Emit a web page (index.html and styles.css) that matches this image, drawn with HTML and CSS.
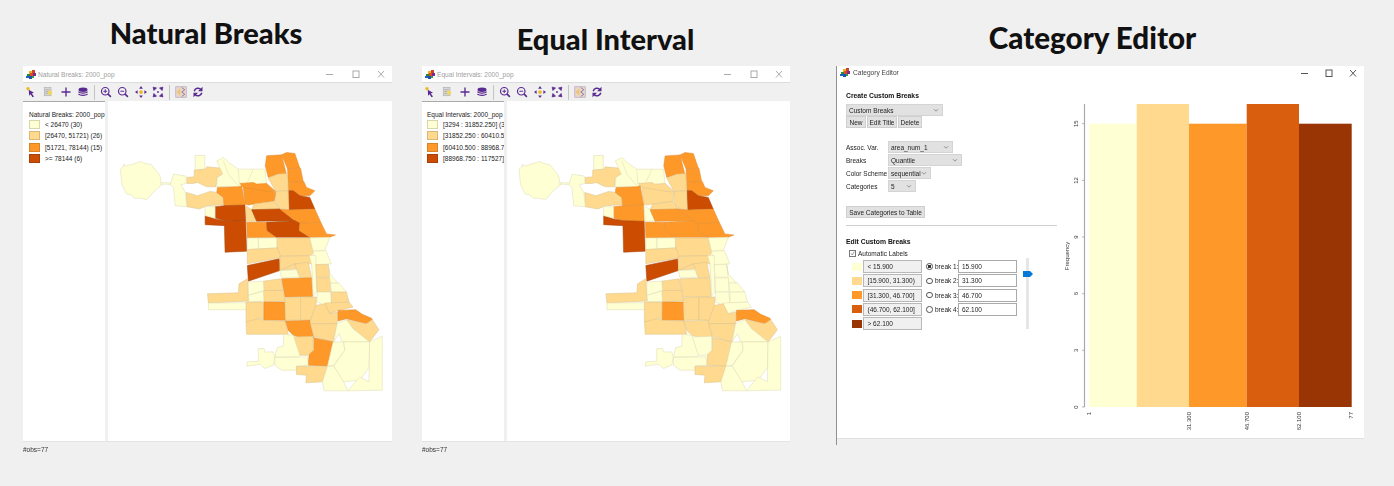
FILE: index.html
```html
<!DOCTYPE html>
<html lang="en">
<head>
<meta charset="utf-8">
<title>Natural Breaks, Equal Interval, Category Editor</title>
<link rel="stylesheet" href="styles.css">
</head>
<body>
<svg class="sprite" aria-hidden="true">
  <defs>
    <g id="logo">
      <rect x="3" y="1" width="3" height="3" fill="#e8b020"/><rect x="6" y="0" width="3" height="3" fill="#d0402a"/>
      <rect x="1" y="4" width="3" height="3" fill="#2a8a3a"/><rect x="4" y="3" width="3" height="3" fill="#e04a20"/>
      <rect x="7" y="3" width="3" height="3" fill="#7a2a90"/><rect x="0" y="6" width="3" height="2" fill="#1f5fc0"/>
      <rect x="3" y="6" width="3" height="3" fill="#2050b0"/><rect x="6" y="6" width="2" height="2" fill="#30a040"/>
    </g>
    <g id="i-select"><path d="M5 5l7 4-3 1 3 4-2 1-2.500-4-2 2z" fill="#5a2a90"/><circle cx="4" cy="3.500" r="2.200" fill="#f0b820"/></g>
    <g id="i-table"><rect x="3" y="2" width="9" height="11" fill="#d8d8d8" stroke="#aaa" stroke-width=".8"/><path d="M4.500 5h6M4.500 7.500h6M4.500 10h6" stroke="#999" stroke-width=".8"/><circle cx="10.500" cy="9" r="3" fill="#f0d860"/></g>
    <g id="i-plus"><path d="M8 2v12M2 8h12" stroke="#5a2a90" stroke-width="1.800"/></g>
    <g id="i-layers"><ellipse cx="8" cy="5" rx="6" ry="3" fill="#5a2a90"/><path d="M2 7.500c1 2.500 11 2.500 12 0M2 10.500c1 2.500 11 2.500 12 0" fill="none" stroke="#5a2a90" stroke-width="1.700"/></g>
    <g id="i-zoomin"><circle cx="7" cy="7" r="5" fill="none" stroke="#5a2a90" stroke-width="1.600"/><path d="M10.500 10.500l4 4" stroke="#5a2a90" stroke-width="2.200"/><path d="M7 4.500v5M4.500 7h5" stroke="#5a2a90" stroke-width="1.300"/></g>
    <g id="i-zoomout"><circle cx="7" cy="7" r="5" fill="none" stroke="#5a2a90" stroke-width="1.600"/><path d="M10.500 10.500l4 4" stroke="#5a2a90" stroke-width="2.200"/><path d="M4.500 7h5" stroke="#5a2a90" stroke-width="1.300"/></g>
    <g id="i-move"><circle cx="8" cy="8" r="2.500" fill="#f0b820"/><path d="M8 0l2.500 3.500h-5zM8 16l2.500-3.500h-5zM0 8l3.500-2.500v5zM16 8l-3.500-2.500v5z" fill="#5a2a90"/></g>
    <g id="i-fit"><path d="M1.500 1.500l4.500 1-3.500 3.500zM14.500 1.500l-4.500 1 3.500 3.500zM1.500 14.500l4.500-1-3.500-3.500zM14.500 14.500l-4.500-1 3.500-3.500z" fill="#5a2a90" stroke="#5a2a90"/><circle cx="8" cy="8" r="1.200" fill="#5a2a90"/></g>
    <g id="i-swatch"><rect x="1" y="1" width="14" height="14" fill="#e8d8c0" stroke="#b9a8d0"/><path d="M9 2l4 3-4 3 4 3-4 3" fill="none" stroke="#8a6ab0" stroke-width="1.200"/><path d="M2 8l5-5v10z" fill="#f0c080"/></g>
    <g id="i-refresh"><path d="M3 7a5 5 0 0 1 9-2M13 9a5 5 0 0 1-9 2" fill="none" stroke="#5a2a90" stroke-width="2"/><path d="M14 1v6H8zM2 15V9h6z" fill="#5a2a90"/></g>
    <g id="i-min"><path d="M0 4.500h7" stroke="currentColor"/></g>
    <g id="i-max"><rect x="1" y="1" width="6" height="6.500" fill="none" stroke="currentColor"/></g>
    <g id="i-close"><path d="M1 1l6 6.500M7 1L1 7.500" stroke="currentColor"/></g>
    <g id="i-chev"><path d="M1 1.500l2.500 2.500L6 1.500" fill="none" stroke="#666" stroke-width=".8"/></g>

    <g id="chicago">
      <g transform="translate(110 140) scale(.33333)">
        <path class="a" d="M30 85l8-6 3-10 2 7 24-6 25-8 10 5 22 5 12 16 12 14 4 14-1 15 5 1-17 13-13 13-11 14-8 4-21-4-12 1-12-11-13-2-8-15-6-13z"/>
        <path class="a" d="M155 125l28 2v4l-28-1z"/>
        <path class="a" d="M255 44h29v41l-29 3z"/>
        <path class="b" d="M252 88l33-3 5-7 45 4 3 18-18 10-2 28h-28l-28-13-12 3h-20v-18l22-2z"/>
        <path class="b" d="M228 155l34 10 38-13 20 3 20 15v22l-50 3-22 10-38-7z"/>
        <path class="a" d="M190 100l38 6v22l-16 4 6 10 7 13 5 43-35-3-3-30-2-25-10-8z"/>
        <path class="a" d="M320 60l20-10 20 18 25 17h80l5 45-75 5-10 3h-65l2-28 16-10z"/>
        <path class="line" d="M385 85l3 50M430 85l-18 40M340 60l15 40 30 35"/>
        <path class="c" d="M470 45l45-3 17 68-27-10-30 10-9-35z"/>
        <path class="c" d="M515 42l15-7 25 3 15 44-37 2z"/>
        <path class="c" d="M533 84l39-2 8 40-45 3z"/>
        <path class="c" d="M535 125l47-3 8 18 25 10-15 15h-30l-20-15h-15z"/>
        <path class="d" d="M535 150h15l20 15 30 5 15 35-78 3z"/>
        <path class="b" d="M475 112l30-12 27-2 3 52-38 2z"/>
        <path class="b" d="M497 152l38-2 2 58-27-6-13-17z"/>
        <path class="cb" d="M395 135l-5-7 40-3 10 5 30-2 27 24-82 3-10-10z"/>
        <path class="cb" d="M400 140l97 15-4 27-61 8-17 3-10-3z"/>
        <path class="c" d="M322 140l63-2 10-3 10 58-63 2-2-25-20-15z"/>
        <path class="b" d="M432 190l61-8 17 23-85 2z"/>
        <path class="dc" d="M315 198l27-3 63-2 2 49-62-2-30-8z"/>
        <path class="d" d="M285 225l30 10 30 5 62 2 3 90-65 3-2-80-58-3z"/>
        <path class="a" d="M285 198h30v34l-30-7z"/>
        <path class="ba" d="M407 195l18 12 15 35h-30z"/>
        <path class="dc" d="M425 207l85-2 45 35-115 2z"/>
        <path class="c" d="M510 205l27 3 78-3 18 40-63 3-15-8z"/>
        <path class="c" d="M410 245h60l2 25 28 20-88 2z"/>
        <path class="dc" d="M470 245l85-5 15 8-2 22 32 20H500l-28-20z"/>
        <path class="c" d="M570 248l63-3 17 35 27 3-17 7h-60l-32-20z"/>
        <path class="a" d="M412 292h33v33l-33 2z"/>
        <path class="a" d="M445 292h55l2 30-55 3z"/>
        <path class="b" d="M502 292h98l10 43-5 10-93 2-10-25z"/>
        <path class="a" d="M600 292l60-2-15 40-35 2z"/>
        <path class="a" d="M610 332l38-2 17 40-50 2z"/>
        <path class="b" d="M412 327l90-5 10 25-2 5-98 18z"/>
      </g>
      <g transform="translate(190 260) scale(.33333)">
        <path class="d" d="M172 15l96-20 2 35-95 32z"/>
        <path class="b" d="M270-12l92-3 3 25-50 0-45 20z"/>
        <path class="b" d="M270 30l45-20 5 15-50 5z"/>
        <path class="b" d="M315 10l40-5 10 45-35 2-10-27z"/>
        <path class="a" d="M270 30l50-2 8 22-53 2z"/>
        <path class="a" d="M358-15h20l2 110-10 13-2-56-3-42z"/>
        <path class="ba" d="M378 12h37l7 38h-42z"/>
        <path class="ba" d="M380 52h42v43h-40z"/>
        <path class="a" d="M382 95h40l3 33-20 7-23-10z"/>
        <path class="a" d="M415 10l5 30 25 28h-23z"/>
        <path class="a" d="M422 68h26l22 27h-45z"/>
        <path class="ba" d="M425 95h45l8 30-53 3z"/>
        <path class="ba" d="M405 128l73-3 12 15-45 10-27 10-13-25z"/>
        <path class="cb" d="M275 55l90-3 3 56-83 2z"/>
        <path class="b" d="M220 62l52-7 8 35h-58z"/>
        <path class="b" d="M220 90h60l5 32-63 3z"/>
        <path class="a" d="M175 65l45-3 2 28-47 15z"/>
        <path class="a" d="M175 105l45-13 2 30-44 3z"/>
        <path class="b" d="M52 100l93-3 2-27 25-15 3 67-120 6z"/>
        <path class="a" d="M55 128l115-1v21H55z"/>
        <path class="b" d="M168 125h52l2 53-17-6-5 13h-32z"/>
        <path class="c" d="M222 125h63l2 55h-65z"/>
        <path class="b" d="M285 112l47-2v68l-45 2z"/>
        <path class="b" d="M332 110h48l-2 30-16 40-30-2z"/>
        <path class="b" d="M168 185l37-10 17 5 65 2 8 40H170z"/>
        <path class="cb" d="M287 182l73-2 12 52-27 3-35-10-15-15z"/>
        <path class="b" d="M378 135l27-5 15 30 25-5-3 35h-80v-10z"/>
        <path class="b" d="M362 190h80l-12 55-58-17z"/>
        <path class="c" d="M445 150l53-2 20 14 28 12 2 5-18 11-60-15-25 7z"/>
        <path class="b" d="M470 178l60 12 18-12 20 30-28 37-50-40z"/>
        <path class="a" d="M442 190l28-12 20 27 50 40h-82l-10-25-16 25z"/>
        <path class="cb" d="M372 232l58 13-17 73-58-3 3-35 14-10z"/>
        <path class="ba" d="M310 230l60-2v42l-15 15h-27z"/>
        <path class="a" d="M282 222l28 3 20 60-5 5h-70l7-28 18-4z"/>
        <path class="a" d="M205 265h17l3 10h25l5 15-5 25-25 10-15-13-40 6 2-13 33-2z"/>
        <path class="a" d="M255 292l98-2 2 25-35 3v12h-45l-20-15z"/>
        <path class="b" d="M320 318h93l-15 47-50 3 2-23-30-2z"/>
        <path class="a" d="M430 245h32l3 25-33 45-19 3z"/>
        <path class="a" d="M462 245h78l-2 77-28 38-50 5-28-47 33-48z"/>
        <path class="a" d="M540 245l38-17v162l-103 2 35-42 28 15z"/>
        <path class="a" d="M413 318h19l28 44 15 30h-72l-5-27z"/>
      </g>
    </g>
  </defs>
</svg>

<main class="stage">
  <section class="column column-natural">
    <h2 class="headline">Natural Breaks</h2>
    <div class="mapwin">
      <header class="titlebar">
        <svg class="logo" viewBox="0 0 10 9"><use href="#logo"/></svg>
        <span class="wintitle">Natural Breaks: 2000_pop</span>
        <span class="winbtns">
          <svg class="winbtn" viewBox="0 0 8 8"><use href="#i-min"/></svg>
          <svg class="winbtn" viewBox="0 0 8 8"><use href="#i-max"/></svg>
          <svg class="winbtn" viewBox="0 0 8 8"><use href="#i-close"/></svg>
        </span>
      </header>
      <nav class="toolbar">
        <svg class="tool" viewBox="0 0 16 16"><use href="#i-select"/></svg>
        <svg class="tool" viewBox="0 0 16 16"><use href="#i-table"/></svg>
        <svg class="tool" viewBox="0 0 16 16"><use href="#i-plus"/></svg>
        <svg class="tool" viewBox="0 0 16 16"><use href="#i-layers"/></svg>
        <i class="toolsep"></i>
        <svg class="tool" viewBox="0 0 16 16"><use href="#i-zoomin"/></svg>
        <svg class="tool" viewBox="0 0 16 16"><use href="#i-zoomout"/></svg>
        <svg class="tool" viewBox="0 0 16 16"><use href="#i-move"/></svg>
        <svg class="tool" viewBox="0 0 16 16"><use href="#i-fit"/></svg>
        <i class="toolsep"></i>
        <svg class="tool" viewBox="0 0 16 16"><use href="#i-swatch"/></svg>
        <svg class="tool" viewBox="0 0 16 16"><use href="#i-refresh"/></svg>
      </nav>
      <div class="mapbody">
        <aside class="legend">
          <div class="legend-title">Natural Breaks: 2000_pop</div>
          <div class="legend-row"><i class="swatch s1"></i><span>&lt; 26470 (30)</span></div>
          <div class="legend-row"><i class="swatch s2"></i><span>[26470, 51721) (26)</span></div>
          <div class="legend-row"><i class="swatch s3"></i><span>[51721, 78144) (15)</span></div>
          <div class="legend-row"><i class="swatch s4"></i><span>&gt;= 78144 (6)</span></div>
        </aside>
        <div class="mapview map-natural"><svg class="map" viewBox="108 100 284 341"><use href="#chicago"/></svg></div>
      </div>
      <footer class="status">#obs=77</footer>
    </div>
  </section>

  <section class="column column-equal">
    <h2 class="headline">Equal Interval</h2>
    <div class="mapwin">
      <header class="titlebar">
        <svg class="logo" viewBox="0 0 10 9"><use href="#logo"/></svg>
        <span class="wintitle">Equal Intervals: 2000_pop</span>
        <span class="winbtns">
          <svg class="winbtn" viewBox="0 0 8 8"><use href="#i-min"/></svg>
          <svg class="winbtn" viewBox="0 0 8 8"><use href="#i-max"/></svg>
          <svg class="winbtn" viewBox="0 0 8 8"><use href="#i-close"/></svg>
        </span>
      </header>
      <nav class="toolbar">
        <svg class="tool" viewBox="0 0 16 16"><use href="#i-select"/></svg>
        <svg class="tool" viewBox="0 0 16 16"><use href="#i-table"/></svg>
        <svg class="tool" viewBox="0 0 16 16"><use href="#i-plus"/></svg>
        <svg class="tool" viewBox="0 0 16 16"><use href="#i-layers"/></svg>
        <i class="toolsep"></i>
        <svg class="tool" viewBox="0 0 16 16"><use href="#i-zoomin"/></svg>
        <svg class="tool" viewBox="0 0 16 16"><use href="#i-zoomout"/></svg>
        <svg class="tool" viewBox="0 0 16 16"><use href="#i-move"/></svg>
        <svg class="tool" viewBox="0 0 16 16"><use href="#i-fit"/></svg>
        <i class="toolsep"></i>
        <svg class="tool" viewBox="0 0 16 16"><use href="#i-swatch"/></svg>
        <svg class="tool" viewBox="0 0 16 16"><use href="#i-refresh"/></svg>
      </nav>
      <div class="mapbody">
        <aside class="legend">
          <div class="legend-title">Equal Intervals: 2000_pop</div>
          <div class="legend-row"><i class="swatch s1"></i><span>[3294 : 31852.250] (37</span></div>
          <div class="legend-row"><i class="swatch s2"></i><span>[31852.250 : 60410.50</span></div>
          <div class="legend-row"><i class="swatch s3"></i><span>[60410.500 : 88968.75</span></div>
          <div class="legend-row"><i class="swatch s4"></i><span>[88968.750 : 117527] (</span></div>
        </aside>
        <div class="mapview map-equal"><svg class="map" viewBox="108 100 284 341"><use href="#chicago"/></svg></div>
      </div>
      <footer class="status">#obs=77</footer>
    </div>
  </section>

  <section class="column column-editor">
    <h2 class="headline">Category Editor</h2>
    <div class="editorwin">
      <header class="titlebar titlebar-editor">
        <svg class="logo" viewBox="0 0 10 9"><use href="#logo"/></svg>
        <span class="wintitle">Category Editor</span>
        <span class="winbtns">
          <svg class="winbtn" viewBox="0 0 8 8"><use href="#i-min"/></svg>
          <svg class="winbtn" viewBox="0 0 8 8"><use href="#i-max"/></svg>
          <svg class="winbtn" viewBox="0 0 8 8"><use href="#i-close"/></svg>
        </span>
      </header>
      <div class="editorbody">
        <div class="controls">
          <h3 class="group">Create Custom Breaks</h3>
          <div class="combo combo-main"><span>Custom Breaks</span><svg class="chev" viewBox="0 0 7 5"><use href="#i-chev"/></svg></div>
          <div class="btnrow">
            <span class="btn btn-new">New</span>
            <span class="btn btn-edit">Edit Title</span>
            <span class="btn btn-del">Delete</span>
          </div>
          <div class="assoc">
            <div class="field"><span class="flabel">Assoc. Var.</span><div class="combo combo-var"><span>area_num_1</span><svg class="chev" viewBox="0 0 7 5"><use href="#i-chev"/></svg></div></div>
            <div class="field"><span class="flabel">Breaks</span><div class="combo combo-breaks"><span>Quantile</span><svg class="chev" viewBox="0 0 7 5"><use href="#i-chev"/></svg></div></div>
            <div class="field"><span class="flabel">Color Scheme</span><div class="combo combo-scheme"><span>sequential</span><svg class="chev" viewBox="0 0 7 5"><use href="#i-chev"/></svg></div></div>
            <div class="field"><span class="flabel">Categories</span><div class="combo combo-cat"><span>5</span><svg class="chev" viewBox="0 0 7 5"><use href="#i-chev"/></svg></div></div>
          </div>
          <span class="btn btn-save">Save Categories to Table</span>
          <hr class="rule">
          <h3 class="group">Edit Custom Breaks</h3>
          <label class="auto"><i class="check"><svg viewBox="0 0 7 7"><path d="M1.500 3.500l1.500 2 3-4.500" fill="none" stroke="#444" stroke-width=".8"/></svg></i>Automatic Labels</label>
          <div class="breaks">
            <div class="breakrows">
              <div class="brow"><i class="chip e1"></i><span class="blabel">&lt; 15.900</span><i class="radio on"></i><span class="bname">break 1:</span><span class="binput">15.900</span></div>
              <div class="brow"><i class="chip e2"></i><span class="blabel">[15.900, 31.300)</span><i class="radio"></i><span class="bname">break 2:</span><span class="binput">31.300</span></div>
              <div class="brow"><i class="chip e3"></i><span class="blabel">[31.300, 46.700]</span><i class="radio"></i><span class="bname">break 3:</span><span class="binput">46.700</span></div>
              <div class="brow"><i class="chip e4"></i><span class="blabel">(46.700, 62.100]</span><i class="radio"></i><span class="bname">break 4:</span><span class="binput">62.100</span></div>
              <div class="brow"><i class="chip e5"></i><span class="blabel">&gt; 62.100</span></div>
            </div>
            <div class="slider"><i class="thumb"></i></div>
          </div>
        </div>
        <svg class="chart" viewBox="1060 79 304 359">
          <rect x="1089.300" y="123.700" width="47.400" height="283.300" fill="#ffffd4"/>
          <rect x="1136.700" y="104" width="52.300" height="303" fill="#fed98e"/>
          <rect x="1189" y="123.700" width="57.700" height="283.300" fill="#fe9929"/>
          <rect x="1246.700" y="104" width="52.300" height="303" fill="#d95f0e"/>
          <rect x="1299" y="123.700" width="52.700" height="283.300" fill="#993404"/>
          <path class="axis" d="M1084.500 104v303"/>
          <path class="tick" d="M1082 123.700h2.500M1082 180.400h2.500M1082 237h2.500M1082 293.700h2.500M1082 350.300h2.500M1082 407h2.500"/>
          <text class="tl" transform="translate(1078 123.700) rotate(-90)">15</text>
          <text class="tl" transform="translate(1078 180.400) rotate(-90)">12</text>
          <text class="tl" transform="translate(1078 237) rotate(-90)">9</text>
          <text class="tl" transform="translate(1078 293.700) rotate(-90)">6</text>
          <text class="tl" transform="translate(1078 350.300) rotate(-90)">3</text>
          <text class="tl" transform="translate(1078 407) rotate(-90)">0</text>
          <text class="tl" transform="translate(1069 256) rotate(-90)">Frequency</text>
          <text class="xl" transform="translate(1091 412) rotate(-90)">1</text>
          <text class="xl" transform="translate(1191 412) rotate(-90)">31.300</text>
          <text class="xl" transform="translate(1248.500 412) rotate(-90)">46.700</text>
          <text class="xl" transform="translate(1301 412) rotate(-90)">62.100</text>
          <text class="xl" transform="translate(1353 412) rotate(-90)">77</text>
        </svg>
      </div>
      <footer class="editorfoot"></footer>
    </div>
  </section>
</main>
</body>
</html>
```
FILE: styles.css
```css
* { box-sizing: border-box; }
html, body { margin: 0; height: 100%; }
body {
  background: #f0f0f0;
  font-family: "Liberation Sans", Arial, sans-serif;
  overflow: hidden;
}
.sprite { position: absolute; width: 0; height: 0; }

.stage { display: flex; align-items: flex-start; height: 486px; }
.column { display: flex; flex-direction: column; flex: none; }
.column-natural { width: 369px; margin-left: 23px; }
.column-equal { width: 368px; margin-left: 30px; }
.column-editor { width: 528px; margin-left: 46px; }

.headline {
  margin: 0;
  height: 66px;
  font-family: Lato, "Open Sans", sans-serif;
  font-weight: 900;
  font-size: 29px;
  line-height: 1;
  color: #111;
  text-align: center;
  white-space: nowrap;
}
.column-natural .headline { padding: 18px 3px 0 0; }
.column-equal .headline { padding: 24px 1px 0 0; }
.column-editor .headline { padding: 23px 0 0 0; margin-left: -15px; font-size: 29.600px; }

.mapwin, .editorwin { filter: blur(.3px); }

.titlebar {
  display: flex;
  align-items: center;
  height: 17px;
  padding: 0 7px 0 3px;
  background: #fff;
  border-bottom: 1px solid #dcdcdc;
}
.titlebar-editor { height: 13px; padding: 0 7px 0 3px; border-bottom: 0; }
.logo { width: 10px; height: 9px; flex: none; }
.wintitle { margin-left: 2px; font-size: 6.600px; color: #a0a0a0; white-space: nowrap; }
.titlebar-editor .wintitle { color: #444; margin-left: 3px; }
.winbtns { margin-left: auto; display: flex; gap: 17.500px; color: #aaa; }
.titlebar-editor .winbtns { gap: 16px; color: #555; }
.winbtn { width: 8px; height: 8px; display: block; }

.toolbar { display: flex; align-items: center; height: 18px; gap: 1.400px; }
.tool { width: 16px; height: 16px; padding: 2px; flex: none; }
.toolsep { flex: none; width: 1.500px; height: 15px; margin: 0 1.200px; background: #c4c4c4; }

.mapbody { display: flex; height: 340px; }
.legend {
  flex: none;
  width: 82px;
  padding: 8px 0 0 6px;
  background: #fff;
  border-top: 1px solid #aaa;
  overflow: hidden;
}
.column-equal .legend { padding-left: 5px; }
.legend-title { font-size: 6.500px; line-height: 9px; color: #222; white-space: nowrap; }
.legend-row { display: flex; align-items: center; gap: 5px; height: 11.300px; font-size: 6.500px; color: #222; white-space: nowrap; }
.swatch { width: 11px; height: 9px; flex: none; border: 1px solid #e0dcc0; }
.s1 { background: #ffffd4; border-color: #d8d6b0; }
.s2 { background: #fed98e; border-color: #d8b878; }
.s3 { background: #fe9929; border-color: #d88428; }
.s4 { background: #cc4c02; border-color: #a84008; }

.mapview { flex: 1; margin-left: 3px; background: #fff; }
.map { display: block; width: 100%; height: 100%; }
.status { height: 16px; padding-top: 3px; font-size: 6.500px; line-height: 10px; color: #333; border-top: 1px solid #e4e4e4; }

.map-natural { --cb: #fe9929; --cbl: #e08c30; --dc: #cc4c02; --dcl: #a84a10; --ba: #fed98e; --bal: #dcc48e; }
.map-equal { --cb: #fed98e; --cbl: #dcc48e; --dc: #fe9929; --dcl: #e08c30; --ba: #ffffd4; --bal: #dedcb4; }
.a { fill: #ffffd4; stroke: #dedcb4; }
.b { fill: #fed98e; stroke: #dcc48e; }
.c { fill: #fe9929; stroke: #e08c30; }
.d { fill: #cc4c02; stroke: #a84a10; }
.cb { fill: var(--cb); stroke: var(--cbl); }
.dc { fill: var(--dc); stroke: var(--dcl); }
.ba { fill: var(--ba); stroke: var(--bal); }
.line { fill: none; stroke: #dedcb4; }
#chicago path { stroke-width: 1.600; stroke-linejoin: round; }

.editorwin { height: 379px; background: #fff; border-left: 1px solid #909090; display: flex; flex-direction: column; }
.editorbody { height: 359px; flex: none; display: flex; }
.editorfoot { flex: 1; background: #f0f0f0; border-top: 1px solid #e0e0e0; }
.controls { flex: none; width: 223px; padding: 12px 0 0 9px; font-size: 6.500px; color: #222; }
.group { margin: 0; font-size: 6.800px; line-height: 9px; font-weight: 700; color: #111; }
.combo { display: flex; align-items: center; justify-content: space-between; height: 12px; padding: 0 3px 0 2px; background: #e1e1e1; border: 1px solid #d4d4d4; white-space: nowrap; }
.chev { width: 6px; height: 4px; flex: none; }
.combo-main { width: 97px; margin-top: 4px; }
.btnrow { display: flex; gap: 1px; }
.btn { display: flex; align-items: center; justify-content: center; height: 12px; background: #e1e1e1; border: 1px solid #cfcfcf; white-space: nowrap; }
.btn-new { width: 20px; }
.btn-edit { width: 30px; }
.btn-del { width: 24px; }
.assoc { margin-top: 13px; display: flex; flex-direction: column; gap: 1px; }
.field { display: flex; align-items: center; }
.flabel { width: 42px; flex: none; white-space: nowrap; }
.combo-var { width: 65px; }
.combo-breaks { width: 74px; }
.combo-scheme { width: 43px; }
.combo-cat { width: 28px; }
.btn-save { width: 79px; margin-top: 14px; }
.rule { margin: 7px 0 0 0; width: 211px; height: 1px; border: 0; background: #cfcfcf; }
.controls .rule + .group { margin-top: 11px; }
.auto { display: flex; align-items: center; gap: 2px; margin: 3px 0 0 3px; line-height: 9px; }
.check { width: 7px; height: 7px; border: 1px solid #777; display: block; background: #fff; }
.check svg { display: block; width: 100%; height: 100%; }
.breaks { display: flex; margin-top: 2px; margin-left: 6px; }
.breakrows { display: flex; flex-direction: column; gap: 1.300px; }
.brow { display: flex; align-items: center; height: 13px; }
.chip { width: 10px; height: 8px; flex: none; margin-right: 1px; }
.e1 { background: #ffffd4; }
.e2 { background: #fed98e; }
.e3 { background: #fe9929; }
.e4 { background: #d95f0e; }
.e5 { background: #993404; }
.blabel { width: 59px; height: 13px; padding-left: 3.500px; line-height: 11px; background: #f0f0f0; border: 1px solid #b8b8b8; white-space: nowrap; flex: none; }
.radio { width: 6.500px; height: 6.500px; margin-left: 4px; border: 1px solid #555; border-radius: 50%; flex: none; background: #fff; }
.radio.on { background: radial-gradient(circle, #333 0 1.700px, #fff 2px); }
.bname { margin-left: 2.500px; width: 23px; white-space: nowrap; flex: none; }
.binput { width: 59px; height: 13px; padding-left: 3px; line-height: 11px; background: #fff; border: 1px solid #aaa; flex: none; }
.slider { position: relative; width: 2.500px; height: 71px; margin: -2px 0 0 9px; background: #e6e6e6; }
.thumb { position: absolute; left: -3px; top: 13px; width: 10px; height: 6px; background: #0078d7; clip-path: polygon(0 0, 70% 0, 100% 50%, 70% 100%, 0 100%); }
.chart { flex: none; width: 304px; height: 359px; }
.axis { stroke: #aaa; stroke-width: 1.200; fill: none; }
.tick { stroke: #999; stroke-width: .7; fill: none; }
.tl { font-size: 6px; fill: #333; text-anchor: middle; }
.xl { font-size: 6px; fill: #333; text-anchor: end; }
```
